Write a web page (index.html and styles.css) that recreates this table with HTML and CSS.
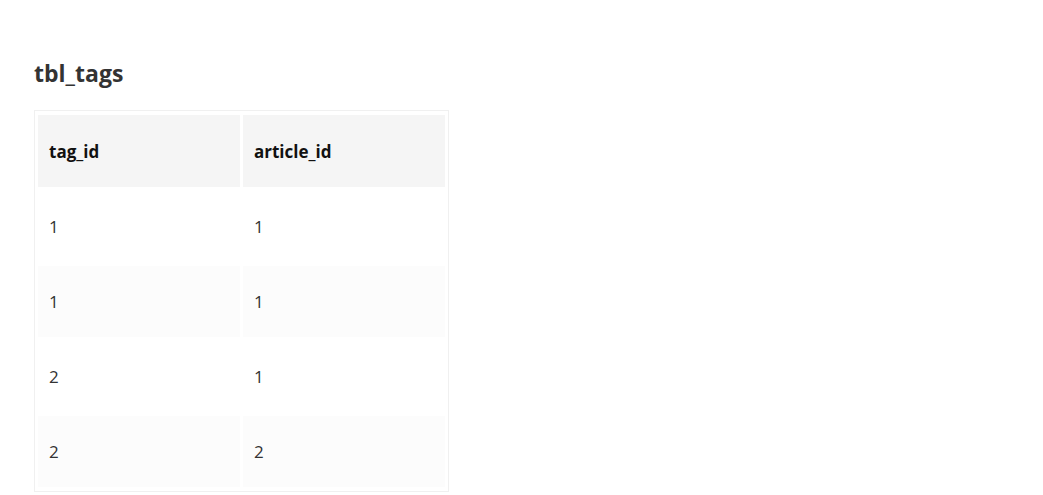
FILE: index.html
```html
<!DOCTYPE html>
<html>
<head>
<meta charset="utf-8">
<link rel="stylesheet" href="styles.css">
</head>
<body>
<div class="page">
  <h2 class="title">tbl_tags</h2>
  <table class="grid">
    <thead>
      <tr><th>tag_id</th><th>article_id</th></tr>
    </thead>
    <tbody>
      <tr><td>1</td><td>1</td></tr>
      <tr><td>1</td><td>1</td></tr>
      <tr><td>2</td><td>1</td></tr>
      <tr><td>2</td><td>2</td></tr>
    </tbody>
  </table>
</div>
</body>
</html>
```
FILE: styles.css
```css
html, body {
  margin: 0;
  padding: 0;
  background: #fff;
}
body {
  font-family: "Open Sans", "Noto Sans", sans-serif;
  color: #333;
}
.page {
  padding: 57px 34px 0 34px;
}
.title {
  margin: 0 0 21px 0;
  font-size: 23px;
  line-height: 32px;
  font-weight: 700;
  color: #333;
}
.grid {
  border-collapse: separate;
  border-spacing: 3px 4px;
  border: 1px solid #f0f0f0;
  width: 415px;
}
.grid th, .grid td {
  width: 50%;
  height: 72px;
  padding: 0 11px;
  text-align: left;
  font-size: 17px;
  box-sizing: border-box;
}
.grid th {
  background: #f5f5f5;
  font-weight: 700;
  color: #111;
}
.grid td {
  height: 71px;
  font-weight: 400;
  color: #333;
}
.grid tbody tr:nth-child(even) td {
  background: #fcfcfc;
}
```
